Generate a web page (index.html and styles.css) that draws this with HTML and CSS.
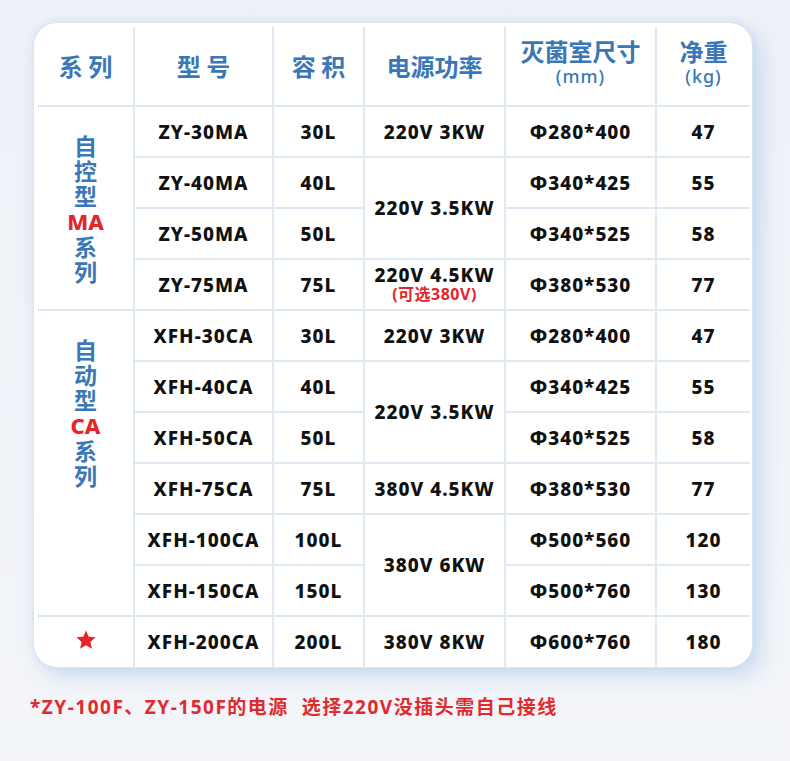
FILE: index.html
```html
<!DOCTYPE html>
<html lang="zh-CN">
<head>
<meta charset="utf-8">
<title>规格参数</title>
<link rel="stylesheet" href="styles.css">
</head>
<body>
<div class="card">
  <table class="spec">
    <colgroup>
      <col class="c-series">
      <col class="c-model">
      <col class="c-cap">
      <col class="c-power">
      <col class="c-size">
      <col class="c-weight">
    </colgroup>
    <thead>
      <tr>
        <th>系 列</th>
        <th>型 号</th>
        <th>容 积</th>
        <th>电源功率</th>
        <th class="th-unit"><span class="h-main">灭菌室尺寸</span><span class="h-unit">(mm)</span></th>
        <th class="th-unit"><span class="h-main">净重</span><span class="h-unit">(kg)</span></th>
      </tr>
    </thead>
    <tbody>
      <tr>
        <td rowspan="4" class="series">自<br>控<br>型<br><em>MA</em><br>系<br>列</td>
        <td>ZY-30MA</td><td>30L</td><td>220V 3KW</td><td>Φ280*400</td><td>47</td>
      </tr>
      <tr>
        <td>ZY-40MA</td><td>40L</td><td rowspan="2">220V 3.5KW</td><td>Φ340*425</td><td>55</td>
      </tr>
      <tr>
        <td>ZY-50MA</td><td>50L</td><td>Φ340*525</td><td>58</td>
      </tr>
      <tr>
        <td>ZY-75MA</td><td>75L</td><td><span class="pw-main">220V 4.5KW</span><span class="pw-note">(可选380V)</span></td><td>Φ380*530</td><td>77</td>
      </tr>
      <tr>
        <td rowspan="6" class="series series-top">自<br>动<br>型<br><em>CA</em><br>系<br>列</td>
        <td>XFH-30CA</td><td>30L</td><td>220V 3KW</td><td>Φ280*400</td><td>47</td>
      </tr>
      <tr>
        <td>XFH-40CA</td><td>40L</td><td rowspan="2">220V 3.5KW</td><td>Φ340*425</td><td>55</td>
      </tr>
      <tr>
        <td>XFH-50CA</td><td>50L</td><td>Φ340*525</td><td>58</td>
      </tr>
      <tr>
        <td>XFH-75CA</td><td>75L</td><td>380V 4.5KW</td><td>Φ380*530</td><td>77</td>
      </tr>
      <tr>
        <td>XFH-100CA</td><td>100L</td><td rowspan="2">380V 6KW</td><td>Φ500*560</td><td>120</td>
      </tr>
      <tr>
        <td>XFH-150CA</td><td>150L</td><td>Φ500*760</td><td>130</td>
      </tr>
      <tr>
        <td class="star-cell"><svg class="star" viewBox="0 0 24 24" width="22" height="22" aria-hidden="true"><polygon points="12,1.5 14.9,8.4 22.5,9.1 16.8,14.1 18.5,21.6 12,17.7 5.5,21.6 7.2,14.1 1.5,9.1 9.1,8.4"/></svg></td>
        <td>XFH-200CA</td><td>200L</td><td>380V 8KW</td><td>Φ600*760</td><td>180</td>
      </tr>
    </tbody>
  </table>
</div>
<p class="note">*ZY-100F、ZY-150F的电源&nbsp; 选择220V没插头需自己接线</p>
</body>
</html>
```

FILE: styles.css
```css
html, body {
  margin: 0;
  padding: 0;
}

body {
  width: 790px;
  height: 761px;
  overflow: hidden;
  background: linear-gradient(180deg, #eef1f7 0%, #f0f3f8 60%, #f3f5f9 100%);
  font-family: "Noto Sans", "Noto Sans CJK SC", sans-serif;
}

.card {
  margin: 22px 0 0 33px;
  width: 720px;
  box-sizing: border-box;
  background: #ffffff;
  border: 1px solid #d9e5f1;
  border-radius: 24px;
  padding: 4px 2px 0 4px;
  box-shadow: 8px 8px 20px rgba(150, 185, 225, 0.42), 0 0 6px rgba(170, 200, 230, 0.25);
  overflow: hidden;
}

.spec {
  width: 712px;
  border-collapse: collapse;
  border-style: hidden;
  table-layout: fixed;
}

.c-series { width: 96px; }
.c-model { width: 139px; }
.c-cap { width: 91px; }
.c-power { width: 141px; }
.c-size { width: 151px; }
.c-weight { width: 94px; }

.spec th,
.spec td {
  border: 2px solid #dfe9f4;
  padding: 0;
  text-align: center;
  vertical-align: middle;
}

.spec thead tr {
  height: 79px;
}

.spec th {
  font-family: "Noto Sans CJK SC", sans-serif;
  font-weight: 700;
  font-size: 24px;
  line-height: 28px;
  color: #3a77b6;
}

.spec th.th-unit {
  padding-bottom: 8px;
}

.h-main {
  display: block;
  line-height: 28px;
}

.h-unit {
  display: block;
  font-family: "Noto Sans", "Noto Sans CJK SC", sans-serif;
  font-weight: 500;
  font-size: 18px;
  line-height: 22px;
  letter-spacing: 1px;
}

.spec tbody tr {
  height: 51px;
}

.spec td {
  font-weight: 800;
  font-size: 19px;
  line-height: 22px;
  letter-spacing: 1px;
  color: #111111;
}

.spec td.series {
  font-family: "Noto Sans CJK SC", sans-serif;
  font-weight: 700;
  font-size: 23px;
  line-height: 25px;
  letter-spacing: 0;
  color: #3a77b6;
}

.spec td.series-top {
  vertical-align: top;
  padding-top: 26px;
}

.series em {
  font-style: normal;
  font-family: "Noto Sans", sans-serif;
  font-weight: 800;
  font-size: 22px;
  color: #e2262b;
}

.pw-main {
  display: block;
  line-height: 20px;
}

.pw-note {
  display: block;
  font-weight: 700;
  font-size: 16px;
  line-height: 19px;
  letter-spacing: 0.5px;
  color: #e2262b;
}

.star-cell {
  line-height: 0;
}

.star {
  fill: #e5242a;
  display: inline-block;
}

.note {
  margin: 27px 0 0 30px;
  font-weight: 700;
  font-size: 19px;
  line-height: 24px;
  letter-spacing: 1.5px;
  color: #e12a2d;
}
```
